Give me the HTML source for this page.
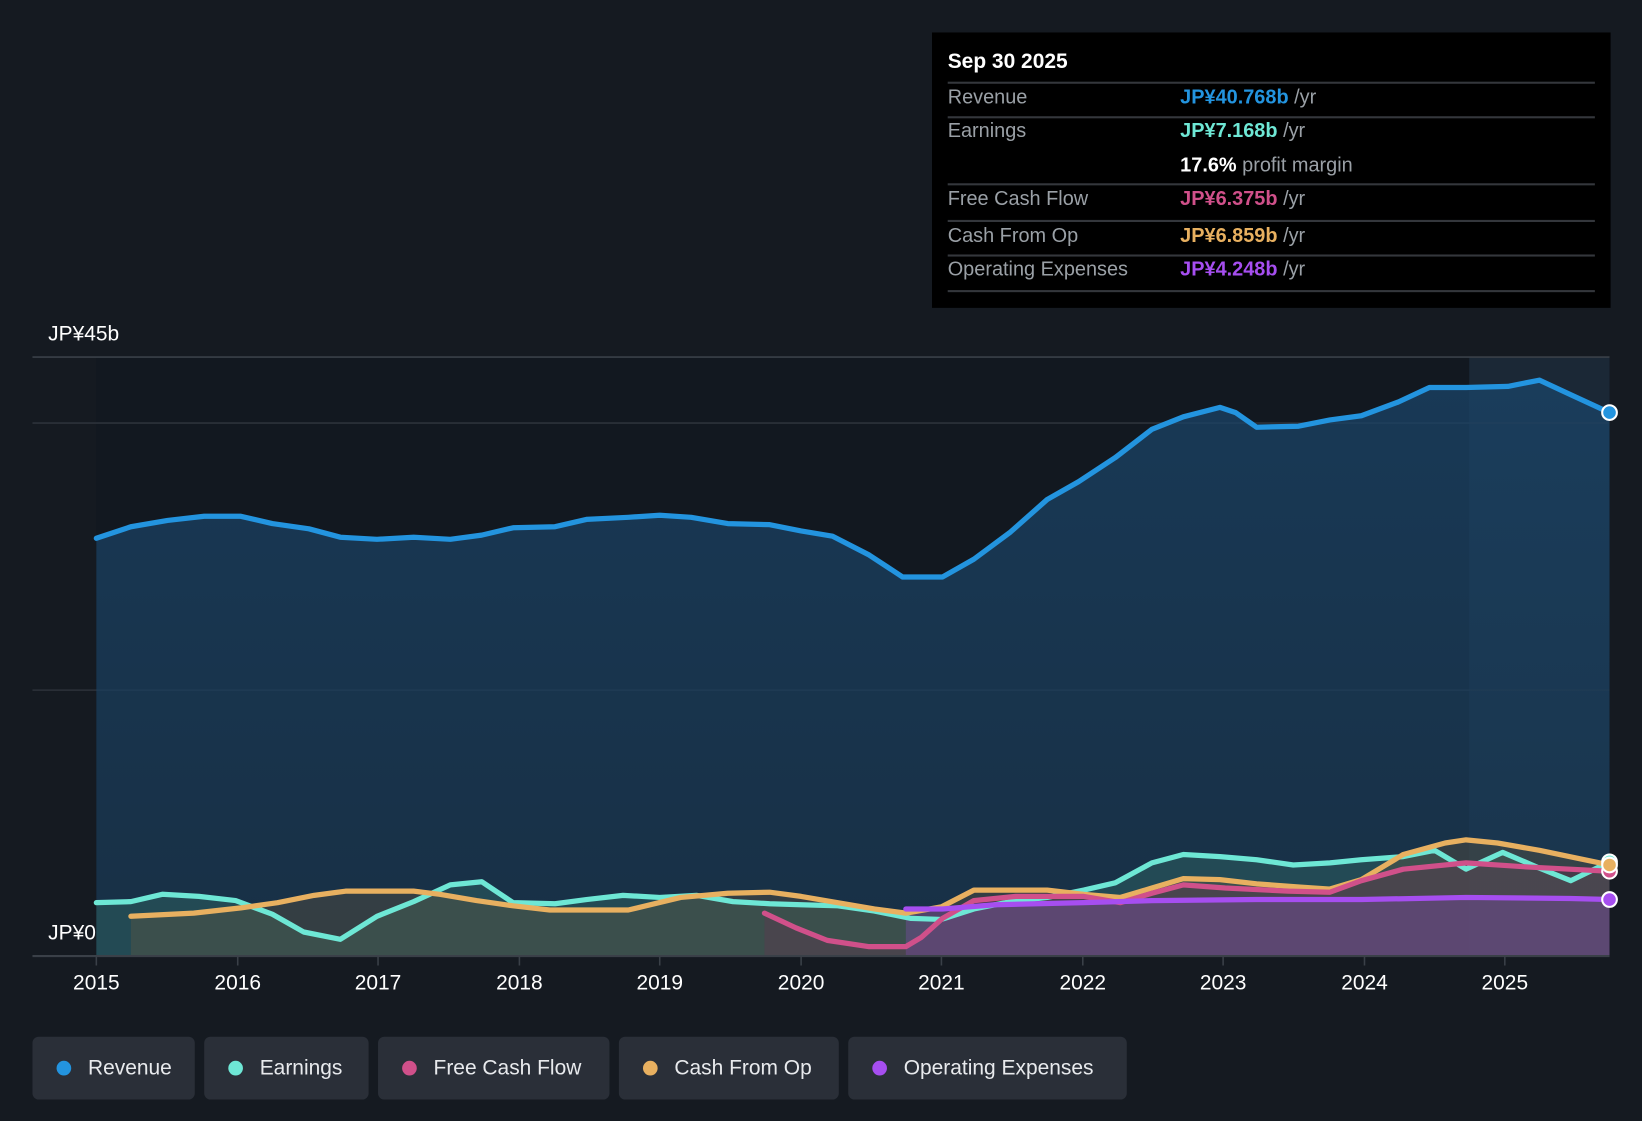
<!DOCTYPE html>
<html><head><meta charset="utf-8"><style>
html,body{margin:0;padding:0;background:#151a21;width:1642px;height:1120px;overflow:hidden}
#w{position:absolute;left:0;top:0;width:1568px;height:1070px;transform:scale(1.04719);transform-origin:0 0;font-family:"Liberation Sans",sans-serif}
.tt{position:absolute;left:890px;top:31px;width:648px;height:263px;background:#000}
.r{position:absolute;left:15px;width:618px;font-size:19px;color:#9aa0a6}
.v{position:absolute;left:222px}
.hl{position:absolute;left:15px;width:618px;height:2px;background:#34373c}
.lg{position:absolute;top:990px;height:60px;background:#2a2f38;border-radius:6px;color:#e8eaed;font-size:20px;line-height:60px}
.lg i{position:absolute;left:23px;top:23px;width:14px;height:14px;border-radius:50%}
.lg span{position:absolute;left:53px}
</style></head><body><div id="w">
<svg width="1568" height="1070" style="position:absolute;left:0;top:0">
<defs>
<linearGradient id="gr" x1="0" y1="0" x2="0" y2="1"><stop offset="0" stop-color="#1a4468" stop-opacity=".75"/><stop offset="1" stop-color="#1a3a55" stop-opacity=".7"/></linearGradient>
</defs>
<rect x="92" y="341" width="1445" height="572" fill="#121820"/>
<rect x="1403" y="341" width="134" height="572" fill="#1b2836"/>
<line x1="31" y1="341" x2="1537" y2="341" stroke="#3a4048" stroke-width="1.5"/>
<line x1="31" y1="404" x2="1537" y2="404" stroke="#2c323a" stroke-width="1.5"/>
<line x1="31" y1="659" x2="1537" y2="659" stroke="#2c323a" stroke-width="1.5"/>
<polygon fill="url(#gr)" points="92,913 92,514 125,503 160,497 195,493 230,493 260,500 295,505 325,513 360,515 395,513 430,515 460,511 490,504 530,503 560,496 600,494 630,492 660,494 695,500 735,501 765,507 795,512 830,530 862,551 900,551 930,534 965,508 1000,477 1030,460 1065,437 1100,410 1130,398 1165,389 1180,394 1200,408 1240,407 1270,401 1300,397 1335,384 1365,370 1400,370 1440,369 1470,363 1500,377 1537,394 1537,913"/>
<polygon fill="#3a7a70" fill-opacity=".35" points="92,913 92,862 125,861 155,854 190,856 225,860 260,873 290,890 325,897 360,875 395,861 430,845 460,842 490,862 530,863 560,859 595,855 630,857 665,855 700,861 735,863 765,864 800,865 835,870 870,877 899,878 930,868 965,861 1000,857 1035,850 1065,843 1100,824 1130,816 1165,818 1200,821 1235,826 1270,824 1300,821 1340,818 1370,812 1400,830 1435,814 1470,829 1500,841 1537,823 1537,913"/>
<polygon fill="#6a5a40" fill-opacity=".35" points="125,913 125,875 185,872 230,867 265,862 300,855 330,851 395,851 420,854 455,860 490,865 525,869 600,869 650,857 695,853 735,852 765,856 800,862 835,868 865,872 899,866 930,850 1000,850 1035,854 1070,857 1100,848 1130,839 1165,840 1200,844 1240,847 1270,849 1300,840 1340,816 1380,805 1400,802 1430,805 1470,812 1537,826 1537,913"/>
<polygon fill="#6a3050" fill-opacity=".3" points="730,913 730,872 760,886 790,898 830,904 865,904 880,895 900,877 930,860 970,856 1035,856 1070,862 1100,853 1130,845 1170,848 1230,851 1270,852 1300,841 1340,830 1400,824 1460,828 1537,832 1537,913"/>
<polygon fill="#7a4aa8" fill-opacity=".4" points="865,913 865,868 900,868 950,864 1035,862 1100,860 1200,859 1300,859 1400,857 1500,858 1537,859 1537,913"/>
<g fill="none" stroke-width="5" stroke-linejoin="round" stroke-linecap="round">
<polyline stroke="#6ee7d5" points="92,862 125,861 155,854 190,856 225,860 260,873 290,890 325,897 360,875 395,861 430,845 460,842 490,862 530,863 560,859 595,855 630,857 665,855 700,861 735,863 765,864 800,865 835,870 870,877 899,878 930,868 965,861 1000,857 1035,850 1065,843 1100,824 1130,816 1165,818 1200,821 1235,826 1270,824 1300,821 1340,818 1370,812 1400,830 1435,814 1470,829 1500,841 1537,823"/>
<polyline stroke="#e8b060" points="125,875 185,872 230,867 265,862 300,855 330,851 395,851 420,854 455,860 490,865 525,869 600,869 650,857 695,853 735,852 765,856 800,862 835,868 865,872 899,866 930,850 1000,850 1035,854 1070,857 1100,848 1130,839 1165,840 1200,844 1240,847 1270,849 1300,840 1340,816 1380,805 1400,802 1430,805 1470,812 1537,826"/>
<polyline stroke="#d0508a" points="730,872 760,886 790,898 830,904 865,904 880,895 900,877 930,860 970,856 1035,856 1070,862 1100,853 1130,845 1170,848 1230,851 1270,852 1300,841 1340,830 1400,824 1460,828 1537,832"/>
<polyline stroke="#a64ef0" points="865,868 900,868 950,864 1035,862 1100,860 1200,859 1300,859 1400,857 1500,858 1537,859"/>
<polyline stroke="#2394df" points="92,514 125,503 160,497 195,493 230,493 260,500 295,505 325,513 360,515 395,513 430,515 460,511 490,504 530,503 560,496 600,494 630,492 660,494 695,500 735,501 765,507 795,512 830,530 862,551 900,551 930,534 965,508 1000,477 1030,460 1065,437 1100,410 1130,398 1165,389 1180,394 1200,408 1240,407 1270,401 1300,397 1335,384 1365,370 1400,370 1440,369 1470,363 1500,377 1537,394"/>
</g>
<g stroke="#fff" stroke-width="2">
<circle cx="1537" cy="394" r="7" fill="#2394df"/>
<circle cx="1537" cy="823" r="7" fill="#6ee7d5"/>
<circle cx="1537" cy="832" r="7" fill="#d0508a"/>
<circle cx="1537" cy="826" r="7" fill="#e8b060"/>
<circle cx="1537" cy="859" r="7" fill="#a64ef0"/>
</g>
<line x1="31" y1="913" x2="1537" y2="913" stroke="#3a4048" stroke-width="2"/>
<g stroke="#3a4048" stroke-width="1.5">
<line x1="92" y1="913" x2="92" y2="922"/><line x1="227" y1="913" x2="227" y2="922"/><line x1="361" y1="913" x2="361" y2="922"/><line x1="496" y1="913" x2="496" y2="922"/><line x1="630" y1="913" x2="630" y2="922"/><line x1="765" y1="913" x2="765" y2="922"/><line x1="899" y1="913" x2="899" y2="922"/><line x1="1034" y1="913" x2="1034" y2="922"/><line x1="1168" y1="913" x2="1168" y2="922"/><line x1="1303" y1="913" x2="1303" y2="922"/><line x1="1437" y1="913" x2="1437" y2="922"/>
</g>
<g fill="#fff" font-size="20" text-anchor="middle" font-family="Liberation Sans,sans-serif">
<text x="92" y="945">2015</text><text x="227" y="945">2016</text><text x="361" y="945">2017</text><text x="496" y="945">2018</text><text x="630" y="945">2019</text><text x="765" y="945">2020</text><text x="899" y="945">2021</text><text x="1034" y="945">2022</text><text x="1168" y="945">2023</text><text x="1303" y="945">2024</text><text x="1437" y="945">2025</text>
</g>
<text x="46" y="325" fill="#fff" font-size="20" font-family="Liberation Sans,sans-serif">JP¥45b</text>
<text x="46" y="897" fill="#fff" font-size="20" font-family="Liberation Sans,sans-serif">JP¥0</text>
</svg>
<div class="tt">
<div class="r" style="top:17px;color:#fff;font-weight:bold;font-size:20px">Sep 30 2025</div>
<div class="hl" style="top:47px"></div>
<div class="r" style="top:52px">Revenue<span class="v"><b style="color:#2394df">JP¥40.768b</b> /yr</span></div>
<div class="hl" style="top:80px"></div>
<div class="r" style="top:84px">Earnings<span class="v"><b style="color:#6ee7d5">JP¥7.168b</b> /yr</span></div>
<div class="r" style="top:117px"><span class="v"><b style="color:#fff">17.6%</b> profit margin</span></div>
<div class="hl" style="top:144px"></div>
<div class="r" style="top:149px">Free Cash Flow<span class="v"><b style="color:#d0508a">JP¥6.375b</b> /yr</span></div>
<div class="hl" style="top:179px"></div>
<div class="r" style="top:184px">Cash From Op<span class="v"><b style="color:#e8b060">JP¥6.859b</b> /yr</span></div>
<div class="hl" style="top:212px"></div>
<div class="r" style="top:216px">Operating Expenses<span class="v"><b style="color:#a64ef0">JP¥4.248b</b> /yr</span></div>
<div class="hl" style="top:246px"></div>
</div>
<div class="lg" style="left:31px;width:155px"><i style="background:#2394df"></i><span>Revenue</span></div>
<div class="lg" style="left:195px;width:157px"><i style="background:#6ee7d5"></i><span>Earnings</span></div>
<div class="lg" style="left:361px;width:221px"><i style="background:#d0508a"></i><span>Free Cash Flow</span></div>
<div class="lg" style="left:591px;width:210px"><i style="background:#e8b060"></i><span>Cash From Op</span></div>
<div class="lg" style="left:810px;width:266px"><i style="background:#a64ef0"></i><span>Operating Expenses</span></div>
</div></body></html>
